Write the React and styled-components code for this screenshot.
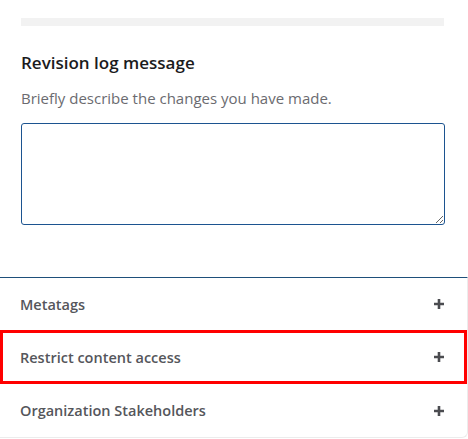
import React from "react";
import styled, { createGlobalStyle } from "styled-components";

const GlobalStyle = createGlobalStyle`
  body {
    margin: 0;
    background: #fff;
    font-family: "Open Sans", "Noto Sans", sans-serif;
  }
`;

const Page = styled.div`
  width: 468px;
  height: 439px;
  display: flex;
  flex-direction: column;
  overflow: hidden;
`;

const Section = styled.section`
  padding: 18px 24px 0 21px;
  height: 259px;
`;

const Divider = styled.div`
  height: 8px;
  background: #f2f2f2;
`;

const Heading = styled.h3`
  margin: 25px 0 0;
  font-size: 17px;
  line-height: 24px;
  font-weight: 600;
  color: #1b1b1d;
`;

const Hint = styled.p`
  margin: 13px 0 0;
  font-size: 15px;
  line-height: 20px;
  color: #6b6b70;
`;

const TextArea = styled.textarea`
  display: block;
  box-sizing: border-box;
  width: 424px;
  height: 102px;
  margin-top: 15px;
  border: 1px solid #1c5490;
  border-radius: 3px;
  font: inherit;
`;

const Panel = styled.div`
  box-sizing: border-box;
  width: 468px;
  border-top: 1px solid #1e4f7a;
  border-right: 1px solid #ececec;
  border-bottom: 1px solid #ececec;
  border-bottom-right-radius: 6px;
`;

const Row = styled.div`
  box-sizing: border-box;
  height: ${(p) => p.$height}px;
  display: flex;
  align-items: center;
  justify-content: space-between;
  padding: 0 ${(p) => (p.$highlight ? "19px" : "22px")} 0
    ${(p) => (p.$highlight ? "17px" : "20px")};
  border: ${(p) => (p.$highlight ? "3px solid #ff0000" : "none")};
`;

const Label = styled.span`
  font-size: 14.5px;
  font-weight: 600;
  color: #55565b;
`;

const Plus = () => (
  <svg width="12" height="12" viewBox="0 0 12 12">
    <path d="M6 1v10M1 6h10" stroke="#4b4c50" strokeWidth="2.6" />
  </svg>
);

const items = [
  { label: "Metatags", height: 52 },
  { label: "Restrict content access", highlight: true, height: 54 },
  { label: "Organization Stakeholders", height: 53 },
];

export default function App() {
  return (
    <Page>
      <GlobalStyle />
      <Section>
        <Divider />
        <Heading>Revision log message</Heading>
        <Hint>Briefly describe the changes you have made.</Hint>
        <TextArea />
      </Section>
      <Panel>
        {items.map((it) => (
          <Row key={it.label} $highlight={it.highlight} $height={it.height}>
            <Label>{it.label}</Label>
            <Plus />
          </Row>
        ))}
      </Panel>
    </Page>
  );
}
